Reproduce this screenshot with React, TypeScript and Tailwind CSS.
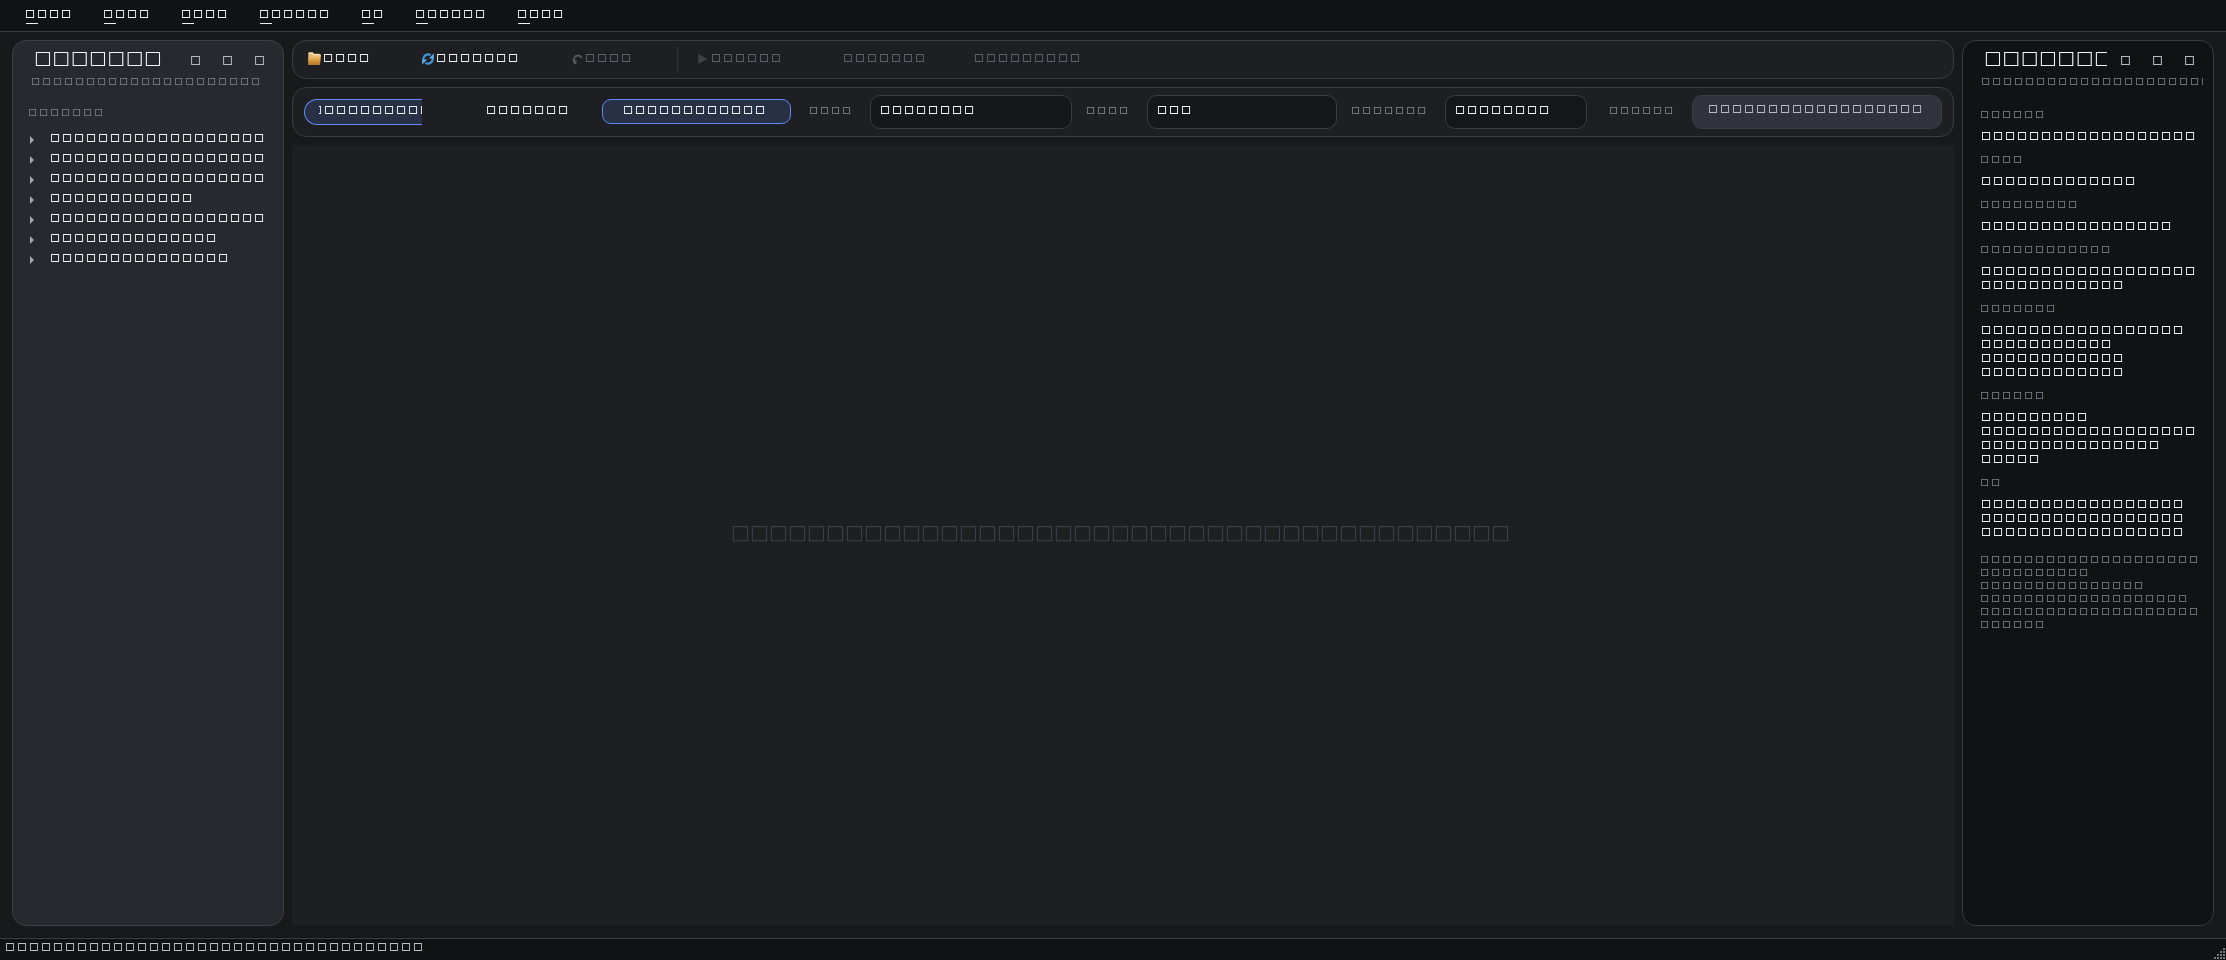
import type { ReactNode } from "react";

const sizes = {
  sm: "font-[Inter,sans-serif] text-[9.5px] leading-[11px] tracking-[2.316px] pl-[0.2px]",
  smLoose: "font-[Inter,sans-serif] text-[9.5px] leading-[13px] tracking-[2.316px] pl-[0.2px]",
  md: "font-[Inter,sans-serif] text-[11px] leading-3 tracking-[1.945px]",
  mdLoose: "font-[Inter,sans-serif] text-[11px] leading-[14px] tracking-[1.945px]",
  icon: "font-[Inter,sans-serif] text-xs leading-[13px]",
  title: "font-['DejaVu_Sans',sans-serif] text-[18.5px] leading-5 tracking-[0.85px]",
  hero: "font-['DejaVu_Sans',sans-serif] text-xl leading-6 tracking-[0.104px]",
};

function T({ n, size = "md", className = "" }: { n: number; size?: keyof typeof sizes; className?: string }) {
  return <span className={`block shrink-0 whitespace-nowrap ${sizes[size]} ${className}`}>{"□".repeat(n)}</span>;
}

function MenuItem({ n }: { n: number }) {
  return (
    <button className="flex flex-col items-start">
      <T n={n} className="text-[#f2f2f4]" />
      <span className="ml-px mt-[3px] h-px w-3 bg-[#f2f2f4]" />
    </button>
  );
}

function PanelHeader({ clip }: { clip: string }) {
  return (
    <div className="flex h-5 items-start pl-[21px]">
      <div className={`mt-px shrink-0 overflow-hidden ${clip}`}>
        <T n={7} size="title" className="text-[#f4f4f6]" />
      </div>
      <div className="mt-[7px] flex shrink-0 text-[#b9bbc3]">
        {[0, 1, 2].map((i) => (
          <button key={i} className="w-8 shrink-0 text-left">
            <T n={1} size="icon" />
          </button>
        ))}
      </div>
    </div>
  );
}

function Folder() {
  return (
    <svg className="-mt-0.5 h-[13px] w-[13px] shrink-0" viewBox="0 0 13 13">
      <defs>
        <linearGradient id="folder" x1="0" y1="0" x2="0" y2="1">
          <stop offset="0" stopColor="#f3cf8e" />
          <stop offset=".5" stopColor="#dda348" />
          <stop offset="1" stopColor="#b37520" />
        </linearGradient>
      </defs>
      <path d="M.3 1.200.8.2h4l1 1.500h6l.5 1.300-.5 9.700H.5z" fill="#e8bb72" />
      <path d="M2.500 5 6.500 3.600 13 2.600l-1 10.200H.5L.3 5.500z" fill="url(#folder)" />
      <path d="M.8 1.400h3.800l1 1.400H11" stroke="#fbe9c8" strokeWidth="1.100" fill="none" />
    </svg>
  );
}

function Refresh() {
  return (
    <svg className="-mt-px h-3 w-3 shrink-0" viewBox="0 0 12 12" fill="none">
      <path d="M1.400 7A4.700 4.700 0 0 1 8.600 2.200M10.600 5A4.700 4.700 0 0 1 3.400 9.800" stroke="#4295d8" strokeWidth="2.200" />
      <path d="M11.800.4v5H6.800zM.2 11.600v-5h5z" fill="#5fb0ec" />
    </svg>
  );
}

function Undo() {
  return (
    <svg className="h-[11px] w-[11px] shrink-0" viewBox="0 0 11 11" fill="none">
      <path d="M2.700 9C.6 5.400 2.600 1.700 5.700 1.500c2-.1 3.300 1 3.900 2.400" stroke="#53565c" strokeWidth="1.800" />
      <path d="M.2 5.600 4.800 6.600 4.200 10.600 1.600 9.400z" fill="#53565c" />
    </svg>
  );
}

function Tool({ n, icon, className }: { n: number; icon?: ReactNode; className: string }) {
  return (
    <button className={`flex shrink-0 items-center ${className}`}>
      {icon}
      <T n={n} className="-mt-[3px]" />
    </button>
  );
}

function Field({ n, className }: { n: number; className: string }) {
  return (
    <div className={`h-[34px] shrink-0 rounded-[10px] border border-[#3a3c42] bg-[#16171b] pl-[9px] pt-2 ${className}`}>
      <T n={n} className="text-[#f4f4f6]" />
    </div>
  );
}

function FieldLabel({ n, className }: { n: number; className: string }) {
  return (
    <div className={`shrink-0 pt-[10px] text-[#858891] ${className}`}>
      <T n={n} size="sm" />
    </div>
  );
}

const tree = [18, 18, 18, 12, 18, 14, 15];

const details: { label: number; lines: number[] }[] = [
  { label: 6, lines: [18] },
  { label: 4, lines: [13] },
  { label: 9, lines: [16] },
  { label: 12, lines: [18, 12] },
  { label: 7, lines: [17, 11, 12, 12] },
  { label: 6, lines: [9, 18, 15, 5] },
  { label: 2, lines: [17, 17, 17] },
];

const notes = [20, 10, 15, 19, 20, 6];

const grip = [1, 2, 3, 4];

export default function App() {
  return (
    <div className="h-[960px] w-[2226px] overflow-hidden bg-[#18191b]">
      <div className="flex h-full flex-col will-change-transform">
        <nav className="flex h-8 shrink-0 gap-[30px] border-b border-[#3a3c42] bg-[#111214] pl-[25px] pt-2">
          {[4, 4, 4, 6, 2, 6, 4].map((n, i) => (
            <MenuItem key={i} n={n} />
          ))}
        </nav>

        <div className="flex h-[906px] shrink-0 gap-2 px-3 pb-3 pt-2">
          <aside className="w-[272px] shrink-0 rounded-[14px] border border-[#3c3f45] bg-[#26292e] pt-1.5">
            <PanelHeader clip="w-[156px]" />
            <T n={21} size="sm" className="ml-[18px] mt-[9px] text-[#7f8490]" />
            <T n={7} size="sm" className="ml-[15px] mt-5 text-[#7f828b]" />
            <ul className="mt-[10px]">
              {tree.map((n, i) => (
                <li key={i} className="flex h-5 items-center pl-[17px]">
                  <svg className="mt-1 h-2 w-1 shrink-0" viewBox="0 0 4 8">
                    <path d="M0 0 4 4 0 8z" fill="#a5a7ab" />
                  </svg>
                  <T n={n} className="ml-4 text-[#f2f2f4]" />
                </li>
              ))}
            </ul>
          </aside>

          <main className="flex w-[1662px] shrink-0 flex-col gap-2">
            <div className="flex h-[39px] shrink-0 items-center rounded-[14px] border border-[#3a3c42] bg-[#1e1f23] pl-[15px] text-[#f2f2f4]">
              <Tool n={4} className="w-[114px] gap-[2px]" icon={<Folder />} />
              <Tool n={7} className="w-[150px] gap-[2px]" icon={<Refresh />} />
              <Tool n={4} className="w-[105px] gap-[2px] text-[#5f626b]" icon={<Undo />} />
              <div className="h-[27px] w-px shrink-0 bg-[#303237]" />
              <Tool
                n={6}
                className="ml-5 w-[145px] gap-[3px] text-[#5f626b]"
                icon={
                  <svg className="-mt-px h-[10px] w-[10px] shrink-0" viewBox="0 0 10 10">
                    <path d="M.2 0 9.500 5 .2 10z" fill="#404143" />
                  </svg>
                }
              />
              <Tool n={7} className="w-[131px] text-[#5f626b]" />
              <Tool n={9} className="text-[#5f626b]" />
            </div>

            <div className="flex h-[50px] shrink-0 items-start rounded-[14px] border border-[#3a3c42] bg-[#1e1f23] pl-[11px] pt-[7px] text-[#f2f2f4]">
              <button className="mt-1 flex h-[26px] w-[118px] shrink-0 items-start rounded-l-[13px] border border-r-0 border-[#5c8cf6] bg-[#273045] pl-[14px] pt-1">
                <span className="block min-w-0 flex-1 overflow-hidden">
                  <T n={10} className="-ml-[7px] text-left" />
                </span>
              </button>
              <button className="ml-16 mt-[9px] w-[116px] shrink-0 text-left">
                <T n={7} />
              </button>
              <button className="mt-1 flex h-[25px] w-[189px] shrink-0 items-start rounded-[9px] border border-[#5c8cf6] bg-[#273045] pl-5 pt-1">
                <T n={12} />
              </button>
              <FieldLabel n={4} className="ml-[18px] w-[61px]" />
              <Field n={8} className="w-[202px]" />
              <FieldLabel n={4} className="ml-[14px] w-[61px]" />
              <Field n={3} className="w-[190px]" />
              <FieldLabel n={7} className="ml-[14px] w-[94px]" />
              <Field n={8} className="w-[142px]" />
              <FieldLabel n={6} className="ml-[22px] w-[83px]" />
              <button className="flex h-[34px] w-[250px] shrink-0 items-start rounded-[10px] border border-[#3a3d45] bg-[#30333c] pl-[15px] pt-[7px] text-[#b9bcc4]">
                <T n={18} />
              </button>
            </div>

            <section className="flex-1 bg-[#1e1f23] pl-[439px] pt-[375px]">
              <T n={41} size="hero" className="text-[#3b4047]" />
            </section>
          </main>

          <aside className="w-[252px] shrink-0 rounded-[14px] border border-[#3a3c42] bg-[#111214] pt-1.5">
            <PanelHeader clip="mr-[13px] w-[123px]" />
            <div className="ml-[18px] mt-[9px] w-[222px] overflow-hidden text-[#7f8490]">
              <T n={21} size="sm" />
            </div>
            <dl className="mt-[22px] pl-[17px]">
              {details.map((d, i) => (
                <div key={i} className="mb-[11px]">
                  <dt className="text-[#7f8490]">
                    <T n={d.label} size="sm" />
                  </dt>
                  <dd className="ml-px mt-[9px] text-[#f2f2f4]">
                    {d.lines.map((n, j) => (
                      <T key={j} n={n} size="mdLoose" />
                    ))}
                  </dd>
                </div>
              ))}
            </dl>
            <div className="mt-[14px] pl-[17px] text-[#7f8490]">
              {notes.map((n, i) => (
                <T key={i} n={n} size="smLoose" />
              ))}
            </div>
          </aside>
        </div>

        <footer className="flex h-[22px] shrink-0 justify-between border-t border-[#3a3c42] bg-[#111214] pl-[5px] pt-[2px]">
          <T n={35} className="text-[#bdbcc8]" />
          <svg className="mr-px mt-[7px] h-3 w-3" viewBox="0 0 12 12">
            {grip.map((row) =>
              grip.slice(0, row).map((col) => (
                <rect key={`${row}-${col}`} x={13 - col * 3} y={row * 3 - 3} width="2" height="2" fill="#77787b" />
              )),
            )}
          </svg>
        </footer>
      </div>
    </div>
  );
}
